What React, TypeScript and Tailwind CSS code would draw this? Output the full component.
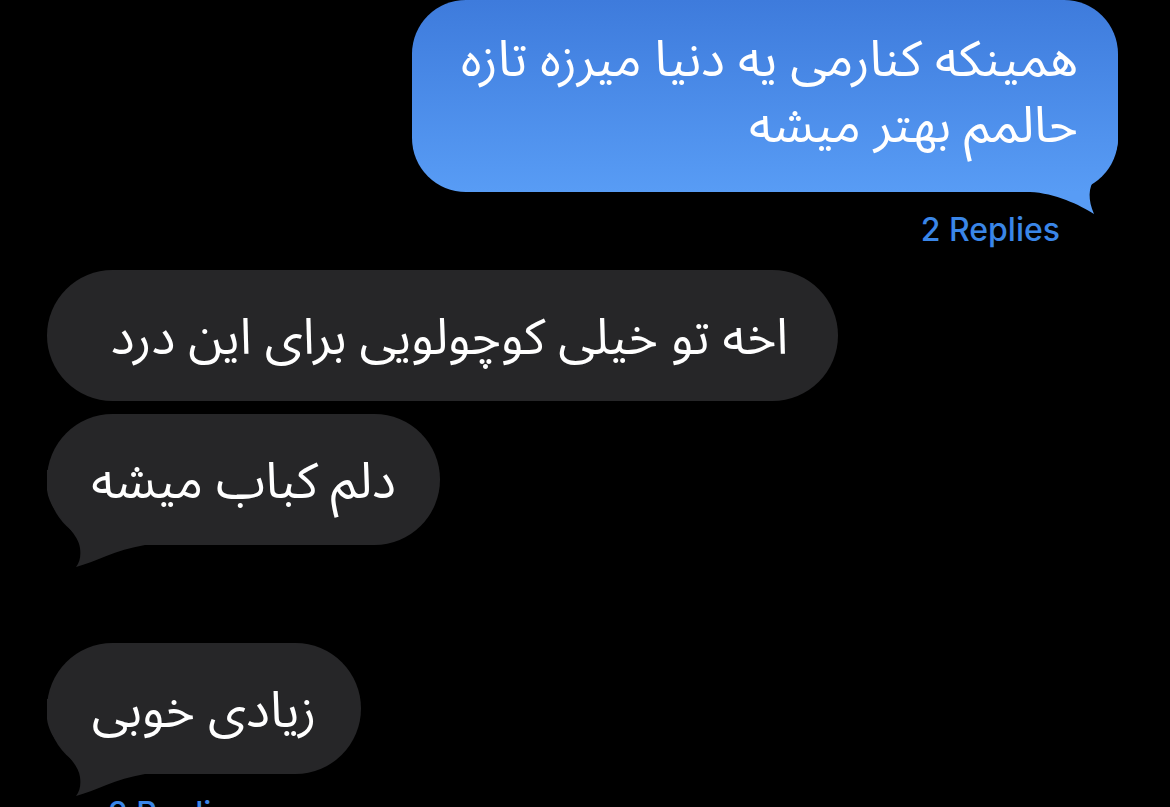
const fa = { fontFamily: '"Noto Sans Arabic", "DejaVu Sans", sans-serif' };
const sf = { fontFamily: 'Inter, "Liberation Sans", sans-serif' };

function GrayTail() {
  return (
    <svg className="absolute left-[-7px] bottom-[-25px]" width="110" height="100" viewBox="0 0 110 100">
      <path d="M7 0 L7 20 C10 45 38 60 40 78 C41 86 40 92 36 97 C55 92 75 80 105 75 L105 0 Z" fill="#262628" />
    </svg>
  );
}

function GrayBubble({ text, w, tail }: { text: string; w: string; tail?: boolean }) {
  return (
    <div className={`relative h-[131px] rounded-full bg-[#262628] flex items-center justify-center ${w}`}>
      {tail && <GrayTail />}
      <p dir="rtl" className="relative text-white text-[50px] leading-none pt-[4px]" style={fa}>
        {text}
      </p>
    </div>
  );
}

export default function App() {
  return (
    <div className="w-[1170px] h-[807px] bg-black overflow-hidden">
      {/* sent */}
      <div className="flex justify-end pr-[52px]">
        <div className="relative w-[706px] h-[192px] rounded-[54px] bg-gradient-to-b from-[#3e7bdc] to-[#589cf5] flex items-center justify-end pr-[40px]">
          <svg className="absolute right-[-2px] bottom-[-24px]" width="90" height="86" viewBox="0 0 90 86">
            <defs>
              <linearGradient id="tailBlue" gradientUnits="userSpaceOnUse" x1="0" y1="-130" x2="0" y2="62">
                <stop offset="0" stopColor="#3e7bdc" />
                <stop offset="1" stopColor="#589cf5" />
              </linearGradient>
            </defs>
            <path d="M0 62 C25 63 50 75 64 84 C58 70 58 58 65 48 C75 35 87 30 88 10 L88 0 L0 0 Z" fill="url(#tailBlue)" />
          </svg>
          <p dir="rtl" className="relative text-white text-[50px] leading-[66px] text-right pb-[6px]" style={fa}>
            همینکه کنارمی یه دنیا میرزه تازه
            <br />
            حالمم بهتر میشه
          </p>
        </div>
      </div>
      <div className="flex justify-end pr-[110px] mt-[20px]">
        <span className="text-[#3a86e8] text-[32px] leading-[36px] font-medium" style={sf}>
          2 Replies
        </span>
      </div>

      {/* received */}
      <div className="pl-[47px] mt-[22px] flex flex-col items-start">
        <GrayBubble text="اخه تو خیلی کوچولویی برای این درد" w="w-[791px] pl-[14px]" />
        <div className="mt-[13px]">
          <GrayBubble text="دلم کباب میشه" w="w-[393px]" tail />
        </div>
        <div className="mt-[98px]">
          <GrayBubble text="زیادی خوبی" w="w-[314px]" tail />
        </div>
        <div className="mt-[22px] pl-[61px]">
          <span className="text-[#3a86e8] text-[32px] leading-[36px] font-medium" style={sf}>
            2 Replies
          </span>
        </div>
      </div>
    </div>
  );
}
